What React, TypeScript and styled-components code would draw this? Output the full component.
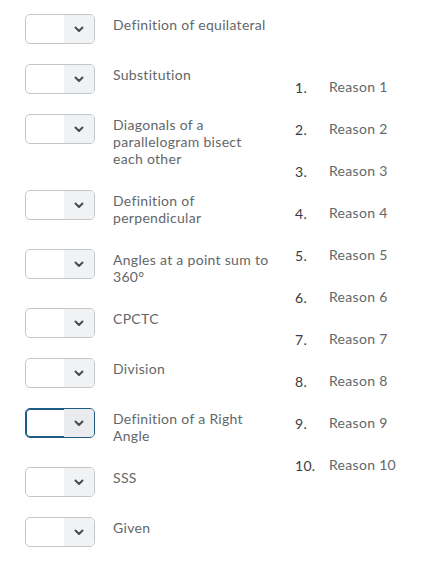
import styled, { createGlobalStyle } from 'styled-components';

const GlobalStyle = createGlobalStyle`
  body {
    margin: 0;
    background: #ffffff;
    font-family: Lato, "Open Sans", sans-serif;
  }
`;

const Page = styled.div`
  display: flex;
  gap: 24px;
  padding: 14px 0 0 25px;
`;

const LeftColumn = styled.div`
  display: flex;
  flex-direction: column;
  gap: 20px;
`;

const MatchRow = styled.div`
  display: flex;
  align-items: flex-start;
  gap: 18px;
`;

const SelectBox = styled.div<{ $focused?: boolean }>`
  box-sizing: border-box;
  width: 70px;
  height: 30px;
  flex-shrink: 0;
  display: flex;
  border: 1px solid ${(p) => (p.$focused ? '#1e5c84' : '#c3c6c9')};
  box-shadow: ${(p) => (p.$focused ? 'inset 0 0 0 1px #1e5c84' : 'none')};
  border-radius: 5px;
  overflow: hidden;
  background: #ffffff;
`;

const SelectValue = styled.div`
  flex: 1;
`;

const SelectArrow = styled.div<{ $focused?: boolean }>`
  width: 30px;
  display: flex;
  align-items: center;
  justify-content: center;
  background: ${(p) => (p.$focused ? '#e9ebee' : '#f1f2f3')};
  color: #494c4e;
`;

const Label = styled.div`
  width: 158px;
  padding: 2px 0 3px;
  font-size: 14px;
  line-height: 17px;
  letter-spacing: 0.3px;
  color: #636769;
`;

const RightColumn = styled.ol`
  list-style: none;
  margin: 51px 0 0;
  padding: 0;
  display: flex;
  flex-direction: column;
`;

const ReasonRow = styled.li`
  display: flex;
  align-items: center;
  height: 42px;
  font-size: 14px;
  line-height: 17px;
  letter-spacing: 0.3px;
`;

const ReasonNumber = styled.span`
  width: 34px;
  padding-top: 3px;
  color: #3a3c3e;
`;

const ReasonText = styled.span`
  color: #636769;
`;

const Chevron = () => (
  <svg width="10" height="7" viewBox="0 0 10 7">
    <path
      d="M1.5 1.5 L5 5 L8.5 1.5"
      fill="none"
      stroke="currentColor"
      strokeWidth="2"
      strokeLinecap="round"
      strokeLinejoin="round"
    />
  </svg>
);

const statements = [
  'Definition of equilateral',
  'Substitution',
  'Diagonals of a parallelogram bisect each other',
  'Definition of perpendicular',
  'Angles at a point sum to 360°',
  'CPCTC',
  'Division',
  'Definition of a Right Angle',
  'SSS',
  'Given',
];

const FOCUSED_INDEX = 7;

export default function App() {
  return (
    <>
      <GlobalStyle />
      <Page>
        <LeftColumn>
          {statements.map((text, i) => (
            <MatchRow key={text}>
              <SelectBox $focused={i === FOCUSED_INDEX}>
                <SelectValue />
                <SelectArrow $focused={i === FOCUSED_INDEX}>
                  <Chevron />
                </SelectArrow>
              </SelectBox>
              <Label>{text}</Label>
            </MatchRow>
          ))}
        </LeftColumn>
        <RightColumn>
          {Array.from({ length: 10 }, (_, i) => (
            <ReasonRow key={i}>
              <ReasonNumber>{i + 1}.</ReasonNumber>
              <ReasonText>Reason {i + 1}</ReasonText>
            </ReasonRow>
          ))}
        </RightColumn>
      </Page>
    </>
  );
}
